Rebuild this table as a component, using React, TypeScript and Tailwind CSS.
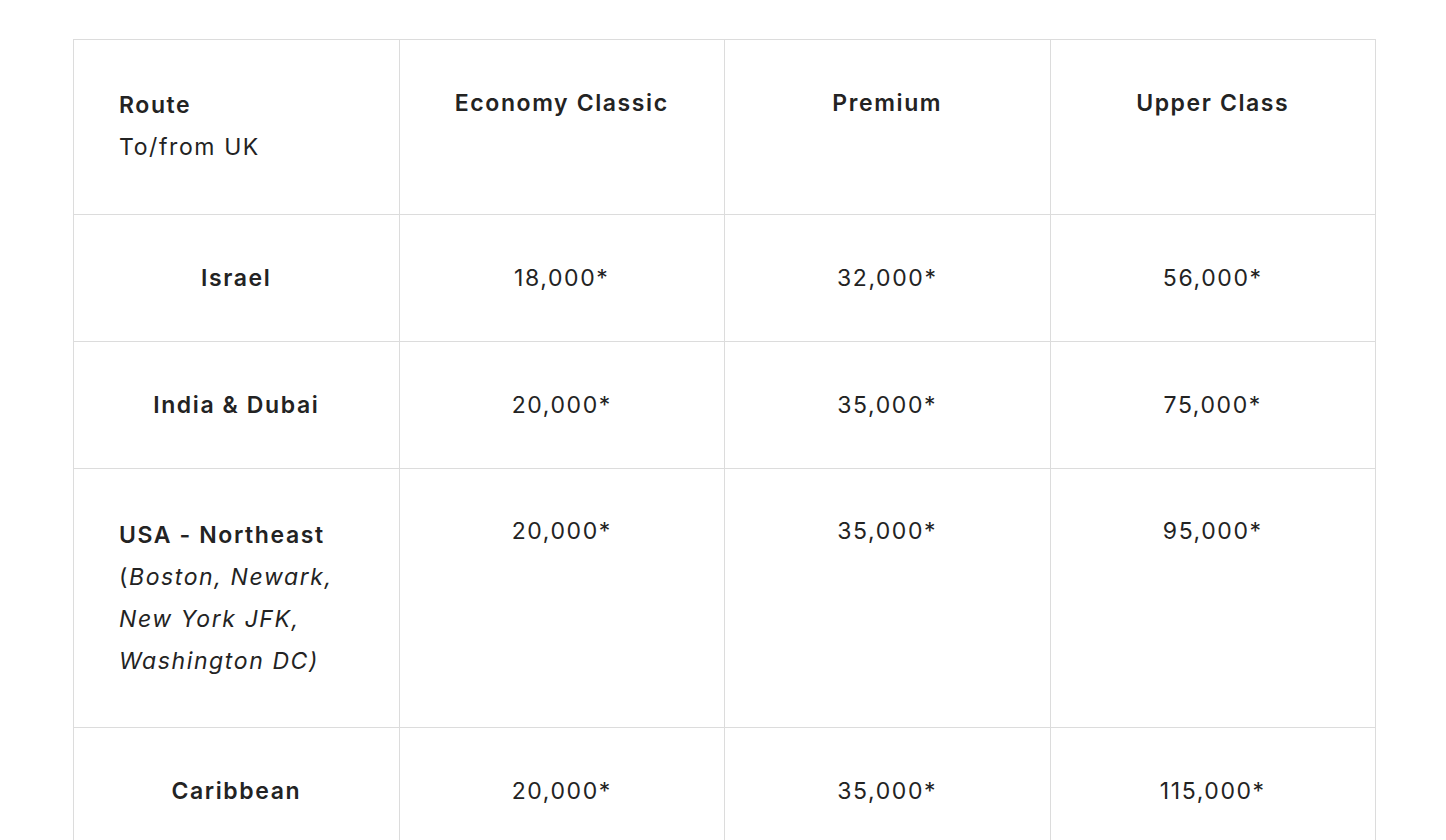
import React from "react";

const rows = [
  { route: "Israel", eco: "18,000*", prem: "32,000*", upper: "56,000*" },
  { route: "India & Dubai", eco: "20,000*", prem: "35,000*", upper: "75,000*" },
  {
    route: "USA - Northeast",
    detail: ["Boston, Newark,", "New York JFK,", "Washington DC)"],
    eco: "20,000*",
    prem: "35,000*",
    upper: "95,000*",
  },
  { route: "Caribbean", eco: "20,000*", prem: "35,000*", upper: "115,000*" },
];

const App = () => {
  return (
    <div
      className="min-h-screen bg-white pl-[73px] pr-[70px] pt-[39px] text-[23px] leading-[42px] tracking-[1.6px] text-[#232323]"
      style={{ fontFamily: "Inter, 'Liberation Sans', sans-serif" }}
    >
      <table className="w-full table-fixed border-collapse">
        <thead>
          <tr className="h-[175px]">
            <th className="border border-[#dcdcdc] px-[45px] pt-[44px] pb-[43px] text-left align-top font-semibold">
              Route
              <div className="font-normal">To/from UK</div>
            </th>
            <th className="border border-[#dcdcdc] px-[30px] pt-[42px] align-top font-semibold">
              Economy Classic
            </th>
            <th className="border border-[#dcdcdc] px-[30px] pt-[42px] align-top font-semibold">
              Premium
            </th>
            <th className="border border-[#dcdcdc] px-[30px] pt-[42px] align-top font-semibold">
              Upper Class
            </th>
          </tr>
        </thead>
        <tbody>
          {rows.map((r) => (
            <tr key={r.route}>
              {r.detail ? (
                <td className="border border-[#dcdcdc] px-[45px] pt-[45px] pb-[45px] text-left align-top">
                  <div className="font-semibold">{r.route}</div>
                  <div className="italic">
                    <span className="not-italic">(</span>
                    {r.detail[0]}
                  </div>
                  <div className="italic">{r.detail[1]}</div>
                  <div className="italic">{r.detail[2]}</div>
                </td>
              ) : (
                <td className="border border-[#dcdcdc] px-[30px] py-[42px] text-center align-top font-semibold">
                  {r.route}
                </td>
              )}
              <td className={`border border-[#dcdcdc] px-[30px] text-center align-top ${r.detail ? "pt-[41px]" : "py-[42px]"}`}>
                {r.eco}
              </td>
              <td className={`border border-[#dcdcdc] px-[30px] text-center align-top ${r.detail ? "pt-[41px]" : "py-[42px]"}`}>
                {r.prem}
              </td>
              <td className={`border border-[#dcdcdc] px-[30px] text-center align-top ${r.detail ? "pt-[41px]" : "py-[42px]"}`}>
                {r.upper}
              </td>
            </tr>
          ))}
        </tbody>
      </table>
    </div>
  );
};

export default App;
